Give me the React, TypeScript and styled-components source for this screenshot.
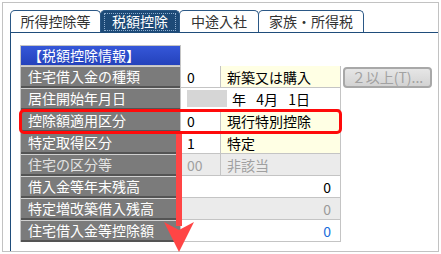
import styled, { createGlobalStyle } from "styled-components";

const GlobalStyle = createGlobalStyle`
  html, body {
    margin: 0;
    padding: 0;
    background: #fff;
  }
  body {
    font-family: "Noto Sans CJK JP", "Noto Sans", sans-serif;
    color: #000;
  }
`;

type Tone = "white" | "yellow" | "gray";

const bgOf = (t: Tone) =>
  t === "yellow" ? "#ffffe4" : t === "gray" ? "#ebebeb" : "#ffffff";

const tabs = [
  { title: "所得控除等", width: 91 },
  { title: "税額控除", width: 80, active: true },
  { title: "中途入社", width: 80 },
  { title: "家族・所得税", width: 106 },
];

export default function App() {
  return (
    <>
      <GlobalStyle />
      <Screen>
        <Frame>
          <TabBar>
            {tabs.map((t) => (
              <Tab key={t.title} $width={t.width} $active={t.active}>
                {t.title}
              </Tab>
            ))}
          </TabBar>
          <Panel>
            <Table>
              <HeaderRow>
                <HeaderCell>【税額控除情報】</HeaderCell>
              </HeaderRow>

              <Row>
                <Label>住宅借入金の種類</Label>
                <Cell>0</Cell>
                <Cell $bg="yellow">新築又は購入</Cell>
                <MultiButton disabled>２以上(T)...</MultiButton>
              </Row>

              <Row>
                <Label>居住開始年月日</Label>
                <Cell $span>
                  <EraBox />
                  <DateText>年  4月  1日</DateText>
                </Cell>
              </Row>

              <Row>
                <Label>控除額適用区分</Label>
                <Cell>0</Cell>
                <Cell $bg="yellow">現行特別控除</Cell>
              </Row>

              <Row>
                <Label>特定取得区分</Label>
                <Cell>1</Cell>
                <Cell $bg="yellow">特定</Cell>
              </Row>

              <Row>
                <Label $dim>住宅の区分等</Label>
                <Cell $bg="gray" $color="#a0a0a0">
                  00
                </Cell>
                <Cell $bg="gray" $color="#a0a0a0">
                  非該当
                </Cell>
              </Row>

              <Row>
                <Label>借入金等年末残高</Label>
                <Cell $span $right>
                  0
                </Cell>
              </Row>

              <Row>
                <Label>特定増改築借入残高</Label>
                <Cell $span $right $bg="gray" $color="#9a9a9a">
                  0
                </Cell>
              </Row>

              <Row>
                <Label>住宅借入金等控除額</Label>
                <Cell $span $right $color="#1a6ddb">
                  0
                </Cell>
              </Row>
            </Table>
          </Panel>
        </Frame>

        {/* 注目箇所の囲みと矢印 */}
        <Highlight />
        <Arrow viewBox="0 0 441 254" width="441" height="254">
          <rect x="176" y="134" width="6" height="92" fill="#ff4545" />
          <polygon points="164,222 179,230 194,222 179,252" fill="#ff4545" />
        </Arrow>
      </Screen>
    </>
  );
}

const Screen = styled.div`
  position: relative;
  width: 441px;
  height: 254px;
  padding: 2px;
  box-sizing: border-box;
  overflow: hidden;
`;

const Frame = styled.div`
  height: 100%;
  box-sizing: border-box;
  border: 1px solid #c2c2c2;
  padding: 7px 0 0 7px;
  display: flex;
  flex-direction: column;
`;

const TabBar = styled.div`
  display: flex;
  height: 22px;
`;

const Tab = styled.div<{ $width: number; $active?: boolean }>`
  position: relative;
  box-sizing: border-box;
  width: ${(p) => p.$width}px;
  height: 22px;
  margin-right: -1px;
  border: 1px solid #2b5886;
  border-bottom: none;
  border-radius: 5px 5px 0 0;
  background: ${(p) => (p.$active ? "#1d4a77" : "#fff")};
  color: ${(p) => (p.$active ? "#fff" : "#333")};
  font-size: 14px;
  line-height: 20px;
  text-align: center;
  white-space: nowrap;

  &::after {
    content: "";
    display: ${(p) => (p.$active ? "block" : "none")};
    position: absolute;
    inset: 2px 3px 1px 3px;
    border: 1px dotted #8eaed0;
  }
`;

const Panel = styled.div`
  flex: 1;
  border-top: 1px solid #1f4d7b;
  border-left: 1px solid #1f4d7b;
  padding: 12px 0 0 9px;
`;

const Table = styled.div`
  display: flex;
  flex-direction: column;
`;

const HeaderRow = styled.div`
  display: flex;
  height: 21px;
`;

const HeaderCell = styled.div`
  box-sizing: border-box;
  width: 161px;
  border: 1px solid #c4c4c4;
  background: linear-gradient(#3557d8, #2442bc);
  color: #fff;
  font-size: 14px;
  line-height: 19px;
  padding-left: 7px;
  white-space: nowrap;
`;

const Row = styled.div`
  display: grid;
  grid-template-columns: 161px 40px 120px auto;
  height: 22px;
`;

const Label = styled.div<{ $dim?: boolean }>`
  box-sizing: border-box;
  border-left: 1px solid #c4c4c4;
  border-right: 1px solid #c4c4c4;
  border-top: 1px solid #d0d0d0;
  background: #7b7b7b;
  box-shadow: inset 0 -2px 0 #545454;
  color: ${(p) => (p.$dim ? "#e2e2e2" : "#fff")};
  font-size: 14px;
  line-height: 19px;
  padding-left: 7px;
  white-space: nowrap;
`;

const Cell = styled.div<{
  $bg?: Tone;
  $span?: boolean;
  $right?: boolean;
  $color?: string;
}>`
  box-sizing: border-box;
  grid-column: ${(p) => (p.$span ? "2 / 4" : "auto")};
  display: flex;
  align-items: center;
  justify-content: ${(p) => (p.$right ? "flex-end" : "flex-start")};
  border-right: 1px solid #c4c4c4;
  border-bottom: 1px solid #c4c4c4;
  background: ${(p) => bgOf(p.$bg ?? "white")};
  color: ${(p) => p.$color ?? "#000"};
  font-size: 14px;
  padding: 0 ${(p) => (p.$right ? "9px" : "0")} 0 6px;
  white-space: pre;
`;

const EraBox = styled.div`
  width: 40px;
  height: 17px;
  background: #d6d6d6;
`;

const DateText = styled.span`
  margin-left: 5px;
  word-spacing: 2px;
`;

const MultiButton = styled.button`
  box-sizing: border-box;
  width: 89px;
  height: 21px;
  margin: 1px 0 0 2px;
  padding: 0;
  border: 2px solid #a8a8a8;
  border-radius: 4px;
  background: linear-gradient(#e6e6e6, #d3d3d3);
  color: #a2a2a2;
  font-family: inherit;
  font-size: 14px;
  line-height: 15px;
  white-space: nowrap;
`;

const Highlight = styled.div`
  position: absolute;
  left: 19px;
  top: 109px;
  width: 323px;
  height: 25px;
  box-sizing: border-box;
  border: 3px solid #ff0a0a;
  border-radius: 5px;
  pointer-events: none;
`;

const Arrow = styled.svg`
  position: absolute;
  left: 0;
  top: 0;
  pointer-events: none;
`;
